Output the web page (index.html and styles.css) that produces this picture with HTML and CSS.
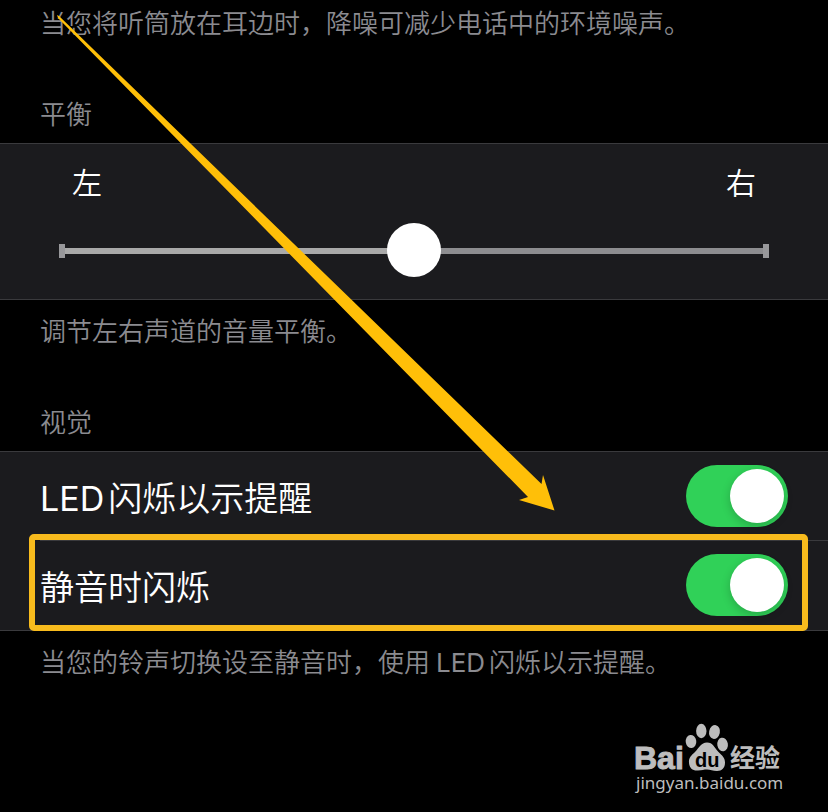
FILE: index.html
```html
<!DOCTYPE html>
<html lang="zh-CN">
<head>
<meta charset="utf-8">
<meta name="viewport" content="width=device-width, initial-scale=1">
<title>音频与视觉</title>
<link rel="stylesheet" href="styles.css">
</head>
<body>
<main class="settings">
  <p class="note">当您将听筒放在耳边时，降噪可减少电话中的环境噪声。</p>

  <section>
    <h2 class="heading" id="balance">平衡</h2>
    <div class="panel balance">
      <div class="balance-labels"><span>左</span><span>右</span></div>
      <input class="slider" type="range" min="-1" max="1" step="0.01" value="0" aria-labelledby="balance">
    </div>
    <p class="note">调节左右声道的音量平衡。</p>
  </section>

  <section>
    <h2 class="heading">视觉</h2>
    <div class="panel">
      <div class="row">
        <label for="led"><span class="latin">LED</span>闪烁以示提醒</label>
        <input class="switch" type="checkbox" role="switch" id="led" checked>
      </div>
      <div class="row highlighted">
        <label for="silent">静音时闪烁</label>
        <input class="switch" type="checkbox" role="switch" id="silent" checked>
      </div>
    </div>
    <p class="note">当您的铃声切换设至静音时，使用<span class="latin inner">LED</span>闪烁以示提醒。</p>
  </section>

  <svg class="arrow" width="560" height="520" viewBox="0 0 560 520" aria-hidden="true">
    <path d="M57 15 59 16 541.5 484 543 475 554.5 510.5 519 500 528 497 58 18Z"/>
  </svg>

  <svg class="watermark" width="160" height="80" viewBox="630 720 160 80" role="img" aria-label="Baidu 经验">
    <text class="brand" x="634" y="769">Bai</text>
    <ellipse cx="691" cy="741.5" rx="5.3" ry="6.6" transform="rotate(-8 691 741.5)"/>
    <ellipse cx="701.3" cy="731" rx="5.2" ry="7.2"/>
    <ellipse cx="714.5" cy="732" rx="5.4" ry="7" transform="rotate(12 714.5 732)"/>
    <ellipse cx="722.6" cy="744.5" rx="5.3" ry="6.8" transform="rotate(-10 722.6 744.5)"/>
    <path d="M707 742.500C701 742.500 699 748 695 752C691 755.500 688.500 758 689 763C689.500 768.500 693 771 698 770.500C702 770.200 704 769.500 707 769.500C710 769.500 713 771 717 771C722 771 725 768 725 762.500C725 757.500 722 755.500 718.500 752C714 747.500 713 742.500 707 742.500Z"/>
    <text class="paw-text" x="695" y="767">du</text>
    <text class="product" x="730" y="767">经验</text>
    <text class="url" x="636" y="789">jingyan.baidu.com</text>
  </svg>
</main>
</body>
</html>
```
FILE: styles.css
```css
* {
  box-sizing: border-box;
}

body {
  margin: 0;
  background: #000;
  color: #fff;
  font-family: Inter, "Noto Sans CJK SC", sans-serif;
  font-weight: 350;
}

.settings {
  position: relative;
  min-height: 100vh;
  padding-top: 6px;
  overflow: hidden;
}

.note,
.heading {
  margin: 0;
  padding: 0 40px;
  color: #8b8b90;
  font-size: 26px;
  font-weight: 350;
  line-height: 36px;
}

.heading {
  margin: 55px 0 10px;
}

.panel {
  border: solid #3a3a3d;
  border-width: 1px 0;
  margin-bottom: 14px;
  background: #1b1b1e;
}

.balance {
  padding: 19px 59px 22px;
}

.balance-labels {
  display: flex;
  justify-content: space-between;
  padding: 0 13px;
  font-size: 30px;
  line-height: 40px;
}

.slider {
  appearance: none;
  display: block;
  width: 100%;
  height: 54px;
  margin: 20px 0 0;
  background:
    linear-gradient(#98989b, #98989b) left 21px / 6px 14px no-repeat,
    linear-gradient(#98989b, #98989b) right 0 top 21px / 6px 14px no-repeat,
    linear-gradient(90deg, #a9a9a9 50%, #8d8d90 50%) 0 25px / 100% 6px no-repeat;
}

.slider::-webkit-slider-thumb {
  appearance: none;
  width: 54px;
  height: 54px;
  border-radius: 50%;
  background: #fff;
}

.row {
  position: relative;
  display: flex;
  align-items: center;
  justify-content: space-between;
  height: 88px;
  padding: 0 40px;
  font-size: 34px;
}

.row + .row {
  height: 90px;
}

.row + .row::before {
  content: "";
  position: absolute;
  top: 0;
  right: 0;
  left: 40px;
  border-top: 1px solid #3a3a3d;
}

.highlighted::after {
  content: "";
  position: absolute;
  inset: -6px 20px -1px 29px;
  border: 6px solid #f8bb1d;
  border-radius: 5px;
  pointer-events: none;
}

.latin {
  margin-right: 4px;
  font-weight: 400;
}

.inner {
  margin-left: 6px;
}

.switch {
  appearance: none;
  width: 102px;
  height: 62px;
  margin: 0;
  padding: 4px;
  border-radius: 31px;
  background: #30d158;
}

.switch::before {
  content: "";
  display: block;
  width: 54px;
  height: 54px;
  margin-left: auto;
  border-radius: 50%;
  background: #fff;
  box-shadow: 0 3px 10px rgb(0 0 0 / 20%);
}

.switch:not(:checked) {
  background: #39393d;
}

.switch:not(:checked)::before {
  margin-left: 0;
}

.arrow {
  position: absolute;
  top: 0;
  left: 0;
  fill: #ffbf08;
  pointer-events: none;
}

.watermark {
  position: absolute;
  right: 38px;
  bottom: 12px;
  fill: #bdbdbd;
}

.brand {
  font: bold 32px "Liberation Sans", sans-serif;
  stroke: #bdbdbd;
  stroke-width: 1;
}

.paw-text {
  fill: #000;
  font: bold 20px "Liberation Sans", sans-serif;
}

.product {
  font: bold 25px "Noto Sans CJK SC", sans-serif;
}

.url {
  font: 17px "Noto Sans", sans-serif;
}
```
